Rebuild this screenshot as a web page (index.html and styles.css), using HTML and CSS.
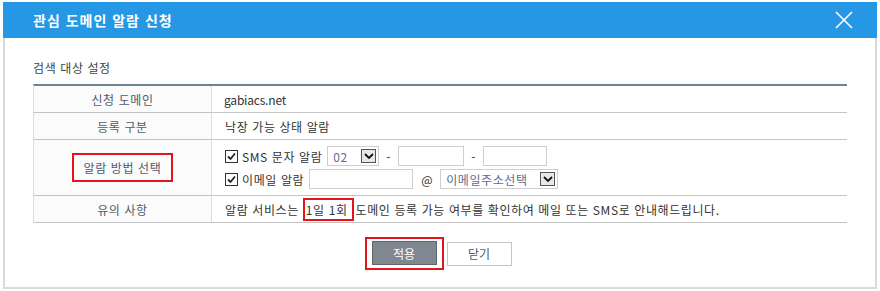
FILE: index.html
```html
<!DOCTYPE html>
<html lang="ko">
  <head>
    <meta charset="UTF-8" />
    <title>관심 도메인 알람 신청</title>
    <link rel="stylesheet" href="styles.css">
  </head>
  <body>
    <div class="modal">
      <div class="modal-header">
        <h1>관심 도메인 알람 신청</h1>
        <button class="close" type="button" aria-label="닫기">
          <svg width="18" height="18" viewBox="0 0 18 18">
            <path d="M1 1 L17 17 M17 1 L1 17" stroke="#fff" stroke-width="1.6" fill="none" />
          </svg>
        </button>
      </div>
      <div class="modal-body">
        <h2>검색 대상 설정</h2>
        <table class="form-table">
          <tr>
            <th>신청 도메인</th>
            <td class="domain">gabiacs.net</td>
          </tr>
          <tr>
            <th>등록 구분</th>
            <td>낙장 가능 상태 알람</td>
          </tr>
          <tr class="tall">
            <th><span class="mark mark-label">알람 방법 선택</span></th>
            <td>
              <div class="line">
                <span class="check">
                  <svg width="13" height="13" viewBox="0 0 13 13">
                    <rect x="0.5" y="0.5" width="12" height="12" fill="#fff" stroke="#333" />
                    <path d="M3 6.5 L5.5 9 L10 3.5" stroke="#222" stroke-width="1.8" fill="none" />
                  </svg>
                  SMS 문자 알람
                </span>
                <div class="select sel-phone">
                  <span>02</span>
                  <i class="arrow">
                    <svg width="10" height="6" viewBox="0 0 10 6"><path d="M1 1 L5 5 L9 1" stroke="#111" stroke-width="1.8" fill="none" /></svg>
                  </i>
                </div>
                <span class="sep">-</span>
                <input type="text" class="inp inp-phone" />
                <span class="sep">-</span>
                <input type="text" class="inp inp-phone2" />
              </div>
              <div class="line">
                <span class="check">
                  <svg width="13" height="13" viewBox="0 0 13 13">
                    <rect x="0.5" y="0.5" width="12" height="12" fill="#fff" stroke="#333" />
                    <path d="M3 6.5 L5.5 9 L10 3.5" stroke="#222" stroke-width="1.8" fill="none" />
                  </svg>
                  이메일 알람
                </span>
                <input type="text" class="inp inp-mail" />
                <span class="sep at">@</span>
                <div class="select sel-mail">
                  <span>이메일주소선택</span>
                  <i class="arrow">
                    <svg width="10" height="6" viewBox="0 0 10 6"><path d="M1 1 L5 5 L9 1" stroke="#111" stroke-width="1.8" fill="none" /></svg>
                  </i>
                </div>
              </div>
            </td>
          </tr>
          <tr>
            <th>유의 사항</th>
            <td>알람 서비스는<span class="mark mark-text">1일 1회</span>도메인 등록 가능 여부를 확인하여 메일 또는 SMS로 안내해드립니다.</td>
          </tr>
        </table>
        <div class="buttons">
          <span class="mark mark-btn"><button type="button" class="btn btn-apply">적용</button></span>
          <button type="button" class="btn btn-close">닫기</button>
        </div>
      </div>
    </div>
  </body>
</html>
```

FILE: styles.css
```css
body {
  margin: 0;
  background: #fff;
  font-family: "Noto Sans CJK KR", "Noto Sans", sans-serif;
  font-size: 12px;
  color: #333;
}

.modal {
  width: 874px;
  margin: 2px 0 0 3px;
}

.modal-header {
  height: 36px;
  background: #2597e4;
  display: flex;
  align-items: center;
  justify-content: space-between;
  padding: 0 24px 0 30px;
}

.modal-header h1 {
  margin: 0;
  color: #fff;
  font-size: 14px;
  font-weight: bold;
  letter-spacing: 1px;
}

.close {
  background: none;
  border: none;
  padding: 0;
  display: flex;
}

.modal-body {
  height: 249px;
  border: 2px solid #dadada;
  border-top: none;
  padding: 0 28px;
}

.modal-body h2 {
  margin: 0;
  padding-top: 22px;
  font-size: 12px;
  font-weight: normal;
  line-height: 16px;
  color: #444;
  letter-spacing: 0.6px;
}

.form-table {
  margin-top: 8px;
  width: 814px;
  border-collapse: separate;
  border-spacing: 0;
  border-top: 2px solid #6c8396;
  border-left: 1px solid #dcdcdc;
  letter-spacing: 0.6px;
}

.form-table th,
.form-table td {
  height: 26px;
  padding: 0;
  border-bottom: 1px solid #c4c4c4;
  font-size: 12px;
}

.form-table th {
  width: 177px;
  background: #fbfbfb;
  border-right: 1px solid #dcdcdc;
  font-weight: normal;
  color: #4f5a6c;
  text-align: center;
}

.form-table td {
  padding-left: 13px;
  color: #333;
}

.form-table td.domain {
  padding-left: 12px;
  letter-spacing: -0.2px;
}

.form-table tr.tall th,
.form-table tr.tall td {
  height: 55px;
}

.line {
  display: flex;
  align-items: center;
  height: 20px;
}

.line + .line {
  margin-top: 3px;
}

.check {
  display: flex;
  align-items: center;
  gap: 4px;
  margin-right: 5px;
}

.select {
  box-sizing: border-box;
  height: 20px;
  border: 1px solid #cfcfcf;
  display: flex;
  align-items: center;
  justify-content: space-between;
  padding: 0 2px 0 5px;
  color: #5a6d8e;
}

.sel-phone {
  width: 52px;
}

.sel-mail {
  width: 118px;
}

.arrow {
  box-sizing: border-box;
  width: 15px;
  height: 14px;
  border: 1px solid #555;
  background: #e8e8e8;
  display: flex;
  align-items: center;
  justify-content: center;
}

.sep {
  margin: 0 7px;
}

.sep.at {
  margin: 0 7px 0 8px;
}

.inp {
  box-sizing: border-box;
  height: 20px;
  border: 1px solid #cfcfcf;
  padding: 0 4px;
  margin: 0;
}

.inp-phone {
  width: 66px;
}

.inp-phone2 {
  width: 64px;
}

.inp-mail {
  width: 104px;
}

.mark {
  display: inline-block;
  border: 2px solid #e3141c;
}

.mark-label {
  padding: 4px 10px;
  line-height: 17px;
}

.mark-text {
  padding: 1px 4px 1px 1px;
  margin: 0 2px 0 4px;
  line-height: 17px;
}

.buttons {
  display: flex;
  justify-content: center;
  align-items: center;
  gap: 3px;
  margin-top: 14px;
  padding-right: 4px;
}

.mark-btn {
  padding: 2px 5px 3px;
}

.btn {
  display: block;
  width: 65px;
  height: 24px;
  font-family: inherit;
  font-size: 12px;
  cursor: pointer;
}

.btn-apply {
  background: #7f8891;
  border: 1px solid #5d666e;
  color: #fff;
}

.btn-close {
  background: #fff;
  border: 1px solid #c4c4c4;
  color: #4f5a6c;
}
```
